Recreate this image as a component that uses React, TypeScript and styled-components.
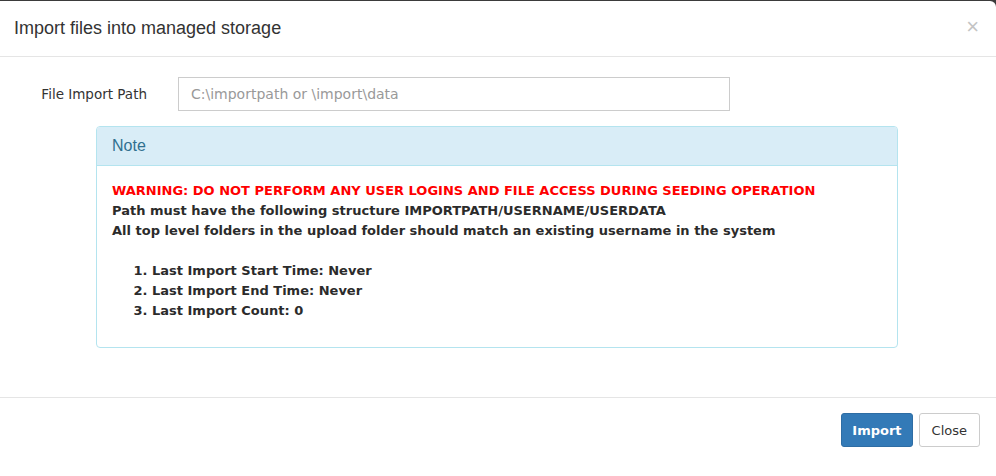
import styled, { createGlobalStyle } from "styled-components"

const GlobalStyle = createGlobalStyle`
  html, body {
    margin: 0;
    padding: 0;
    background: #3b3b3b;
  }
  * {
    box-sizing: border-box;
  }
`

const Modal = styled.div`
  width: 996px;
  height: 475px;
  margin-top: 1px;
  background: #fff;
  border-top-right-radius: 6px;
  display: flex;
  flex-direction: column;
  font-family: "DejaVu Sans", "Open Sans", sans-serif;
  color: #333;
`

const Header = styled.div`
  height: 56px;
  display: flex;
  align-items: center;
  justify-content: space-between;
  padding: 0 17px 0 14px;
  border-bottom: 1px solid #e5e5e5;
`

const Title = styled.h4`
  margin: 0;
  font-family: "Liberation Sans", Arial, sans-serif;
  font-size: 18px;
  font-weight: normal;
  color: #333;
`

const CloseX = styled.span`
  font-family: "Liberation Sans", Arial, sans-serif;
  font-size: 22px;
  color: #c4c4c4;
  line-height: 1;
  margin-top: -3px;
`

const Body = styled.div`
  flex: 1;
  padding: 20px 15px 0;
`

const FormRow = styled.div`
  display: flex;
  align-items: center;
  height: 34px;
`

const Label = styled.label`
  width: 132px;
  text-align: right;
  font-size: 13.5px;
  color: #333;
`

const Input = styled.input`
  margin-left: 31px;
  width: 552px;
  height: 34px;
  border: 1px solid #ccc;
  padding: 0 12px;
  font-family: "DejaVu Sans", "Open Sans", sans-serif;
  font-size: 14px;
  color: #555;
  outline: none;
  &::placeholder {
    color: #999;
  }
`

const Panel = styled.div`
  margin: 15px 0 0 81px;
  width: 802px;
  height: 222px;
  border: 1px solid #b4e4ef;
  border-radius: 4px;
  overflow: hidden;
`

const PanelHeading = styled.div`
  height: 39px;
  background: #d9edf7;
  border-bottom: 1px solid #b4e4ef;
  color: #31708f;
  font-family: "Liberation Sans", Arial, sans-serif;
  font-size: 16px;
  display: flex;
  align-items: center;
  padding: 0 15px;
`

const PanelBody = styled.div`
  padding: 15px 15px;
  font-size: 13px;
  font-weight: bold;
  line-height: 20px;
`

const Line = styled.div<{ $warn?: boolean }>`
  color: ${(p) => (p.$warn ? "#ff0000" : "#2b2b2b")};
  white-space: nowrap;
`

const List = styled.ol`
  margin: 20px 0 0;
  padding-left: 40px;
  color: #2b2b2b;
`

const Footer = styled.div`
  height: 79px;
  border-top: 1px solid #e5e5e5;
  display: flex;
  justify-content: flex-end;
  align-items: flex-start;
  gap: 6px;
  padding: 15px 16px 0;
`

const Button = styled.button<{ $primary?: boolean }>`
  height: 34px;
  padding: 0 ${(p) => (p.$primary ? "10px" : "12px")};
  border-radius: 3px;
  font-family: "DejaVu Sans", "Open Sans", sans-serif;
  font-size: 13px;
  font-weight: ${(p) => (p.$primary ? "bold" : "normal")};
  color: ${(p) => (p.$primary ? "#fff" : "#333")};
  background: ${(p) => (p.$primary ? "#337ab7" : "#fff")};
  border: 1px solid ${(p) => (p.$primary ? "#2e6da4" : "#ccc")};
`

const stats = [
  "Last Import Start Time: Never",
  "Last Import End Time: Never",
  "Last Import Count: 0",
]

const App = () => {
  return (
    <>
      <GlobalStyle />
      <Modal>
        <Header>
          <Title>Import files into managed storage</Title>
          <CloseX>×</CloseX>
        </Header>
        <Body>
          <FormRow>
            <Label>File Import Path</Label>
            <Input placeholder="C:\importpath or \import\data" />
          </FormRow>
          <Panel>
            <PanelHeading>Note</PanelHeading>
            <PanelBody>
              <Line $warn>
                WARNING: DO NOT PERFORM ANY USER LOGINS AND FILE ACCESS DURING SEEDING OPERATION
              </Line>
              <Line>Path must have the following structure IMPORTPATH/USERNAME/USERDATA</Line>
              <Line>All top level folders in the upload folder should match an existing username in the system</Line>
              <List>
                {stats.map((s) => (
                  <li key={s}>{s}</li>
                ))}
              </List>
            </PanelBody>
          </Panel>
        </Body>
        <Footer>
          <Button $primary>Import</Button>
          <Button>Close</Button>
        </Footer>
      </Modal>
    </>
  )
}

export default App
